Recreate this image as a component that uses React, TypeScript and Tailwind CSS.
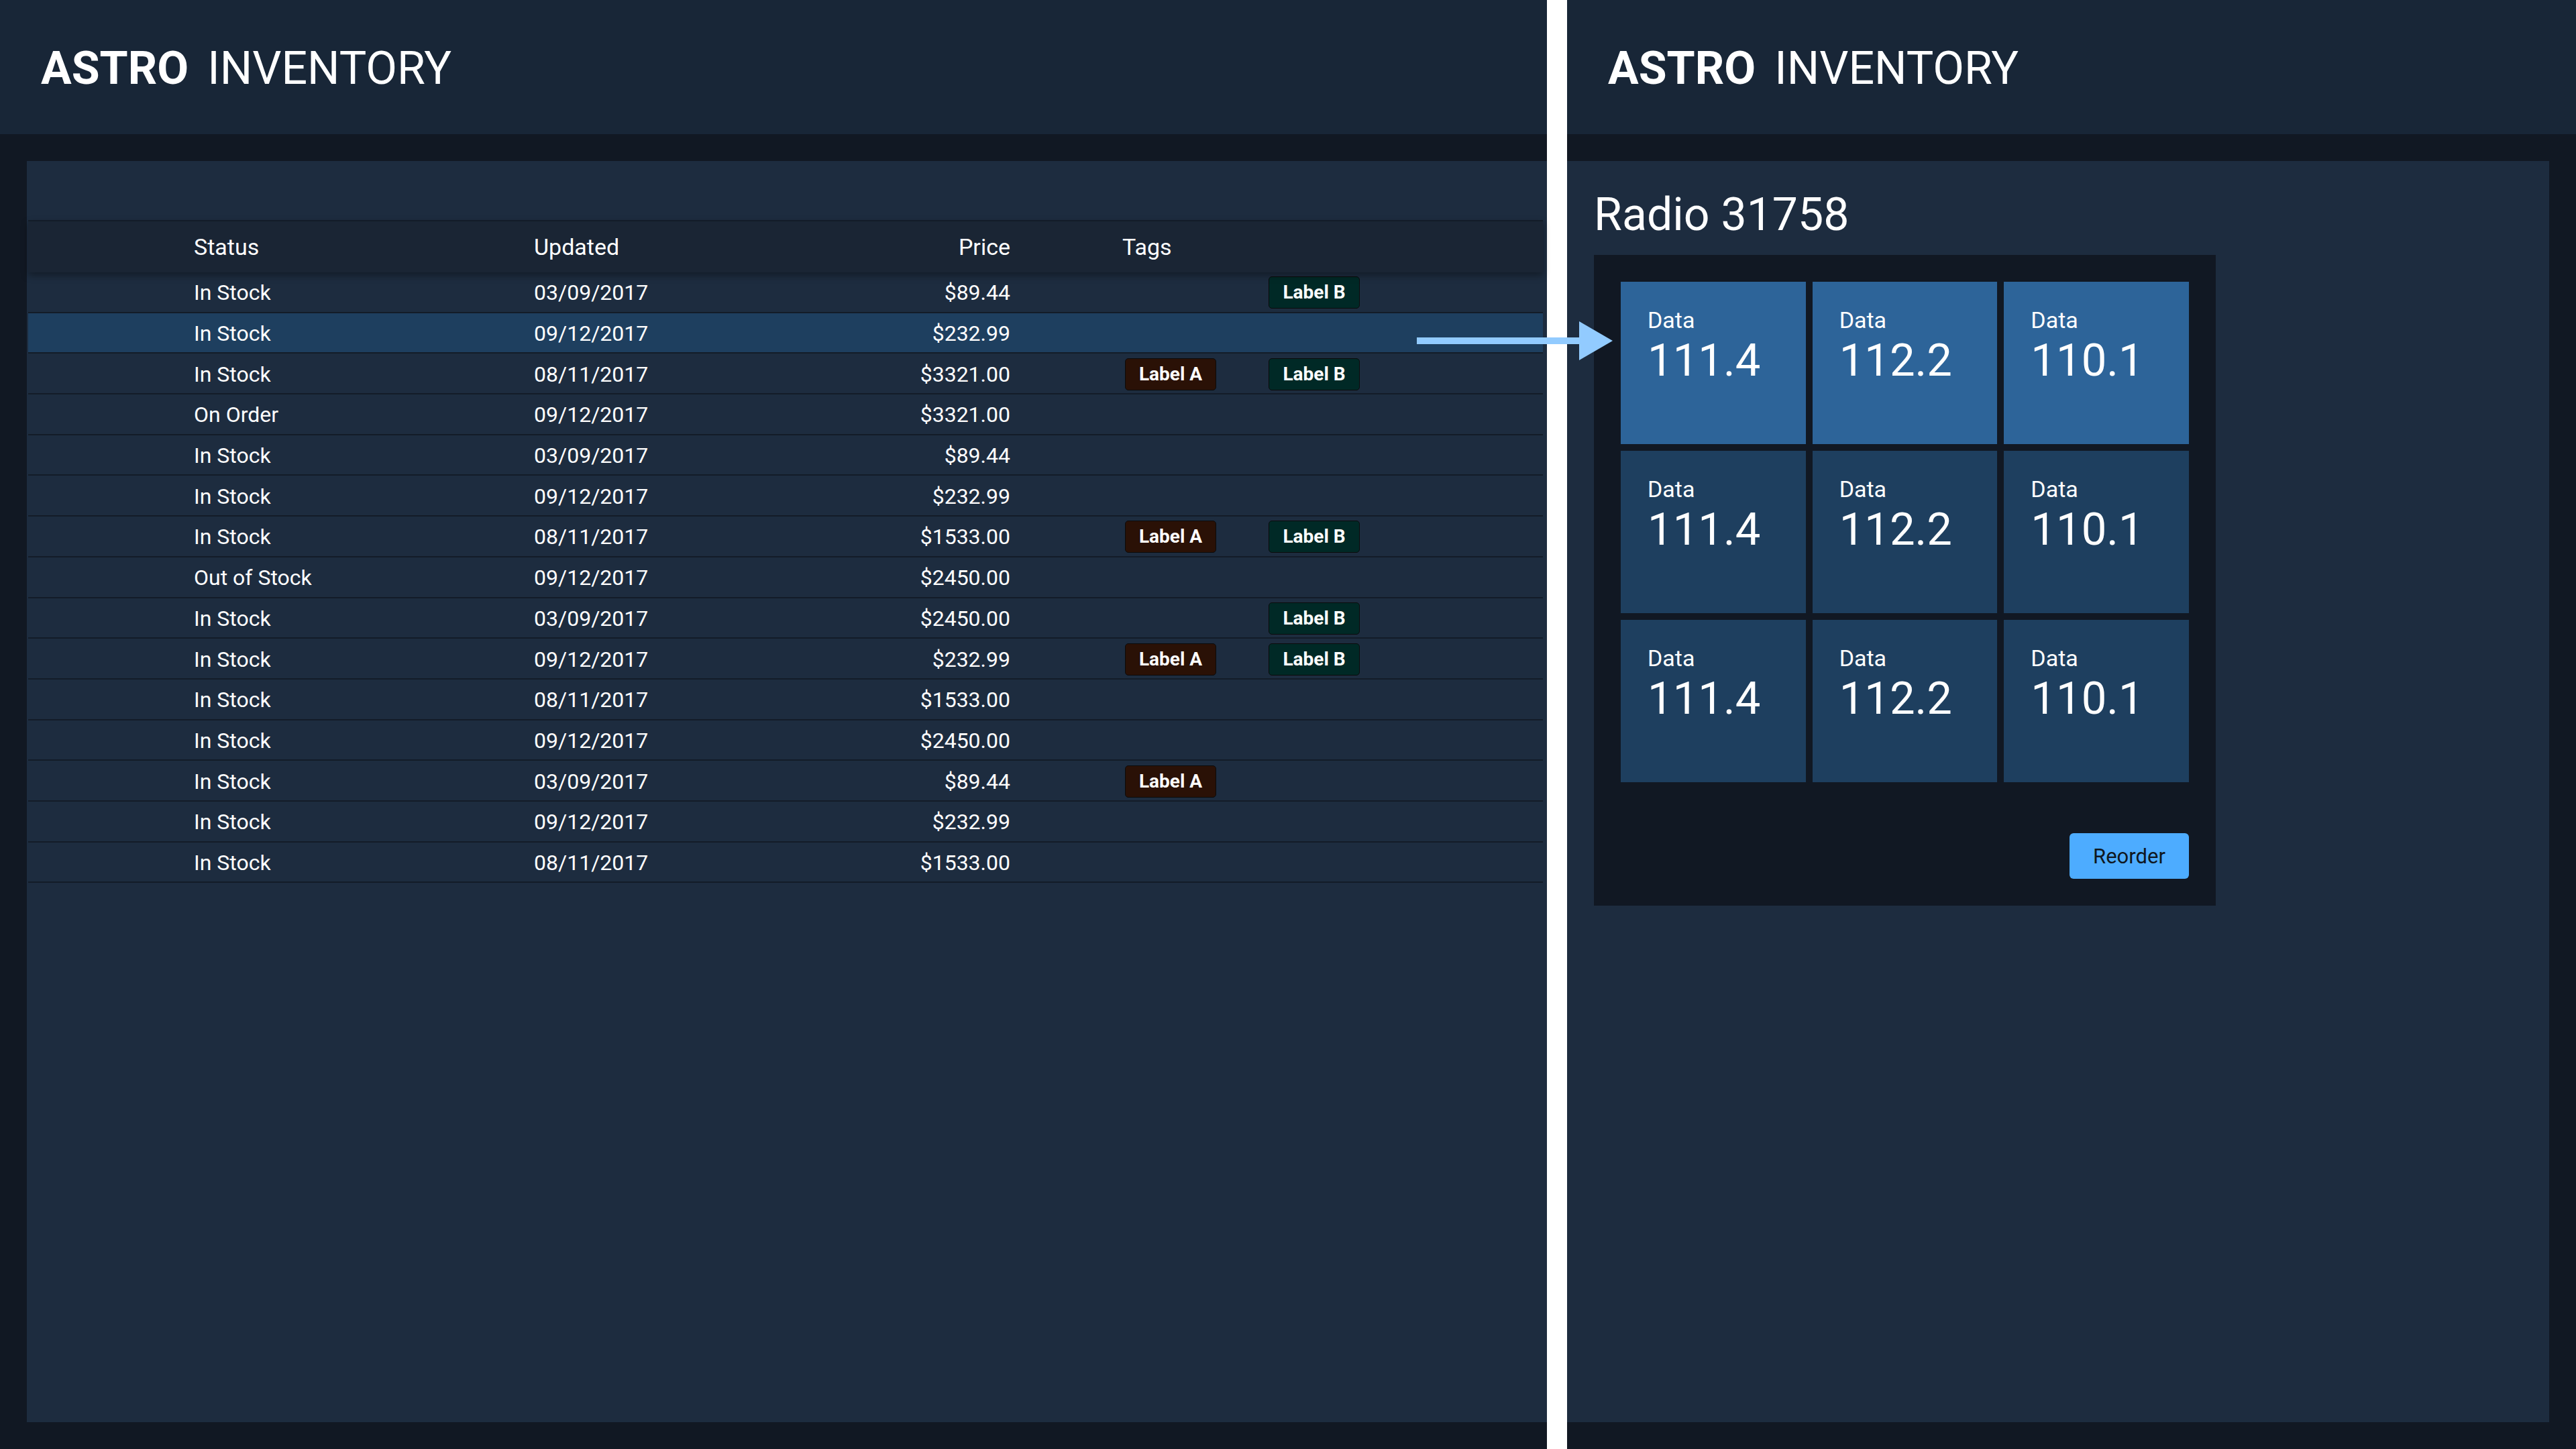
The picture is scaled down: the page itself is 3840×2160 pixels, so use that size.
import React from "react";

type Row = { status: string; date: string; price: string; a?: boolean; b?: boolean; sel?: boolean };

const rows: Row[] = [
  { status: "In Stock", date: "03/09/2017", price: "$89.44", b: true },
  { status: "In Stock", date: "09/12/2017", price: "$232.99", sel: true },
  { status: "In Stock", date: "08/11/2017", price: "$3321.00", a: true, b: true },
  { status: "On Order", date: "09/12/2017", price: "$3321.00" },
  { status: "In Stock", date: "03/09/2017", price: "$89.44" },
  { status: "In Stock", date: "09/12/2017", price: "$232.99" },
  { status: "In Stock", date: "08/11/2017", price: "$1533.00", a: true, b: true },
  { status: "Out of Stock", date: "09/12/2017", price: "$2450.00" },
  { status: "In Stock", date: "03/09/2017", price: "$2450.00", b: true },
  { status: "In Stock", date: "09/12/2017", price: "$232.99", a: true, b: true },
  { status: "In Stock", date: "08/11/2017", price: "$1533.00" },
  { status: "In Stock", date: "09/12/2017", price: "$2450.00" },
  { status: "In Stock", date: "03/09/2017", price: "$89.44", a: true },
  { status: "In Stock", date: "09/12/2017", price: "$232.99" },
  { status: "In Stock", date: "08/11/2017", price: "$1533.00" },
];

const tiles = [
  ["111.4", "112.2", "110.1"],
  ["111.4", "112.2", "110.1"],
  ["111.4", "112.2", "110.1"],
];

function Header() {
  return (
    <div className="h-[200px] shrink-0 bg-[#182637] flex items-center pl-[61px] pt-[4px] text-white">
      <span className="text-[68px] leading-none font-bold">ASTRO</span>
      <span className="text-[68px] leading-none font-normal ml-[28px]">INVENTORY</span>
    </div>
  );
}

function Badge({ kind }: { kind: "A" | "B" }) {
  return (
    <div
      className={
        kind === "A"
          ? "w-[136px] h-[48px] rounded-[5px] border border-[#0b0b0b] bg-[#2a1106] flex items-center justify-center text-[28px] font-bold text-white leading-none"
          : "w-[136px] h-[48px] rounded-[5px] border border-[#0b0b0b] bg-[#002926] flex items-center justify-center text-[28px] font-bold text-white leading-none"
      }
    >
      Label {kind}
    </div>
  );
}

export default function App() {
  return (
    <div
      className="relative w-[3840px] h-[2160px] flex bg-[#111823] overflow-hidden"
      style={{ fontFamily: "Roboto, 'Noto Sans', sans-serif" }}
    >
      {/* Left screen */}
      <div className="w-[2306px] shrink-0 flex flex-col">
        <Header />
        <div className="flex-1 flex pl-[40px] py-[40px]">
          <div className="flex-1 bg-[#1d2c3f] flex flex-col pl-[2px] pr-[6px]">
            <div className="h-[88px] shrink-0" />
            <div className="relative z-10 h-[78px] shrink-0 border-t-2 border-[#131c28] bg-[#1a2534] flex items-center text-white text-[34px] leading-none shadow-[0_5px_10px_rgba(0,0,0,0.35)]">
              <div className="pl-[247px] w-[754px]">Status</div>
              <div className="w-[420px]">Updated</div>
              <div className="w-[290px] text-right">Price</div>
              <div className="ml-[167px]">Tags</div>
            </div>
            {rows.map((r, i) => (
              <div
                key={i}
                className={
                  (r.sel ? "bg-[#1e3f5f] " : "") +
                  "h-[60.7px] shrink-0 border-b-2 border-[#131c28] flex items-center pt-[2px] text-white text-[32px] leading-none"
                }
              >
                <div className="pl-[247px] w-[754px]">{r.status}</div>
                <div className="w-[420px]">{r.date}</div>
                <div className="w-[290px] text-right">{r.price}</div>
                <div className="ml-[171px] w-[214px]">{r.a ? <Badge kind="A" /> : null}</div>
                <div>{r.b ? <Badge kind="B" /> : null}</div>
              </div>
            ))}
          </div>
        </div>
      </div>

      {/* Divider */}
      <div className="w-[30px] shrink-0 bg-white" />

      {/* Right screen */}
      <div className="flex-1 flex flex-col">
        <Header />
        <div className="flex-1 flex pr-[40px] py-[40px]">
          <div className="flex-1 bg-[#1d2c3f] flex flex-col items-start pl-[40px] pt-[46px]">
            <div className="text-white text-[68px] leading-none">Radio 31758</div>
            <div className="mt-[26px] w-[927px] bg-[#111823] p-[40px] flex flex-col">
              <div className="grid grid-cols-3 gap-[10px]">
                {tiles.map((row, ri) =>
                  row.map((v, ci) => (
                    <div
                      key={ri + "-" + ci}
                      className={
                        (ri === 0 ? "bg-[#2d6499] " : "bg-[#1e3f5f] ") +
                        "h-[242px] pt-[40px] pl-[40px] flex flex-col text-white"
                      }
                    >
                      <div className="text-[34px] leading-none">Data</div>
                      <div className="mt-[10px] text-[67px] leading-none">{v}</div>
                    </div>
                  ))
                )}
              </div>
              <div className="mt-[76px] flex justify-end">
                <button className="w-[178px] h-[68px] rounded-[6px] bg-[#4dacff] text-[#0f1720] text-[31px] leading-none flex items-center justify-center">
                  Reorder
                </button>
              </div>
            </div>
          </div>
        </div>
      </div>

      {/* Arrow overlay */}
      <svg
        className="absolute left-[2112px] top-[479px]"
        width="292"
        height="58"
        viewBox="0 0 292 58"
      >
        <rect x="0" y="24" width="244" height="10" fill="#92cbff" />
        <polygon points="242,0 292,29 242,58" fill="#92cbff" />
      </svg>
    </div>
  );
}
